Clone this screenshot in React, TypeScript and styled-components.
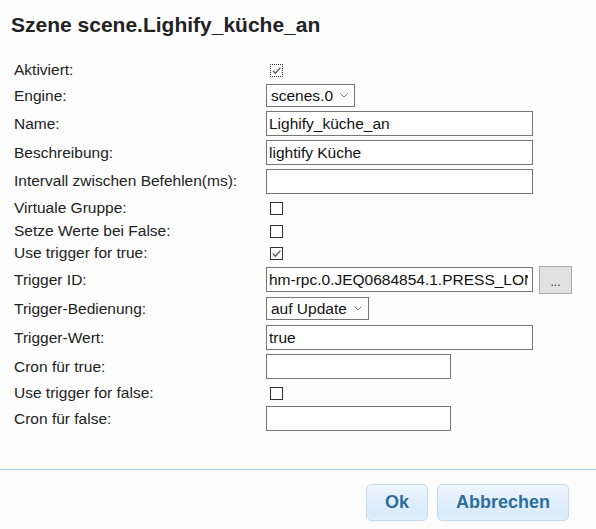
import React from 'react';
import styled, { createGlobalStyle } from 'styled-components';

const GlobalStyle = createGlobalStyle`
  body {
    margin: 0;
    background: #fdfdfd;
    font-family: 'Liberation Sans', Arial, sans-serif;
    color: #222;
  }
`;

const Dialog = styled.div`
  width: 596px;
  height: 529px;
  display: flex;
  flex-direction: column;
`;

const Title = styled.h1`
  margin: 0;
  height: 58px;
  box-sizing: border-box;
  padding: 13px 0 0 11px;
  font-size: 21px;
  font-weight: bold;
  line-height: normal;
  color: #222;
`;

const Form = styled.div`
  display: flex;
  flex-direction: column;
  padding-left: 14px;
`;

const Row = styled.div<{ $h: number }>`
  display: grid;
  grid-template-columns: 252px 1fr;
  align-items: center;
  height: ${(p) => p.$h}px;
`;

const Label = styled.label`
  font-size: 15.5px;
  color: #222;
  white-space: nowrap;
`;

const Cell = styled.div`
  display: flex;
  align-items: center;
`;

const Box = styled.span<{ $focus?: boolean }>`
  display: inline-flex;
  align-items: center;
  justify-content: center;
  width: 13px;
  height: 13px;
  box-sizing: border-box;
  margin-left: 4px;
  border: 1px ${(p) => (p.$focus ? 'dotted' : 'solid')} #333;
  background: #fff;
`;

const TextInput = styled.input<{ $w: number }>`
  width: ${(p) => p.$w}px;
  height: 25px;
  box-sizing: border-box;
  border: 1px solid #767676;
  padding: 0 4px 0 2px;
  margin: 0;
  font-family: 'Liberation Sans', Arial, sans-serif;
  font-size: 15.5px;
  color: #111;
  background: #fff;
  outline: none;
`;

const Select = styled.div<{ $w: number }>`
  display: flex;
  align-items: center;
  justify-content: space-between;
  width: ${(p) => p.$w}px;
  height: 23px;
  box-sizing: border-box;
  border: 1px solid #767676;
  padding: 0 6px 0 4px;
  font-size: 15.5px;
  color: #111;
  background: #fff;
`;

const PickButton = styled.button`
  width: 33px;
  height: 28px;
  margin-left: 6px;
  box-sizing: border-box;
  border: 1px solid #adadad;
  background: #e1e1e1;
  color: #333;
  font-family: 'Liberation Sans', Arial, sans-serif;
  font-size: 12px;
  padding: 4px 0 0;
`;

const Footer = styled.div`
  margin-top: auto;
  height: 60px;
  box-sizing: border-box;
  border-top: 1px solid #aac8db;
  display: flex;
  justify-content: flex-end;
  align-items: flex-start;
  gap: 9px;
  padding: 14px 27px 0 0;
`;

const DialogButton = styled.button`
  height: 37px;
  box-sizing: border-box;
  padding: 0 18px;
  border: 1px solid #c5dbec;
  border-radius: 5px;
  background: linear-gradient(#eef6fd, #dfeefb 55%, #d9eaf9 85%, #e2effb);
  color: #2e6e9e;
  font-family: 'Liberation Sans', Arial, sans-serif;
  font-size: 18px;
  font-weight: bold;
`;

const Check = ({ checked, focus }: { checked?: boolean; focus?: boolean }) => (
  <Box $focus={focus}>
    {checked && (
      <svg width="11" height="11" viewBox="0 0 11 11">
        <polyline points="1.8,5.6 4.4,8.2 9.4,2.6" fill="none" stroke="#555" strokeWidth="1.3" />
      </svg>
    )}
  </Box>
);

const Chevron = () => (
  <svg width="8" height="5" viewBox="0 0 8 5">
    <polyline points="0.5,0.5 4,4 7.5,0.5" fill="none" stroke="#777" strokeWidth="1" />
  </svg>
);

type Field =
  | { label: string; h: number; kind: 'check'; checked?: boolean; focus?: boolean }
  | { label: string; h: number; kind: 'select'; value: string; w: number }
  | { label: string; h: number; kind: 'text'; value: string; w: number; pick?: boolean };

const fields: Field[] = [
  { label: 'Aktiviert:', h: 24, kind: 'check', checked: true, focus: true },
  { label: 'Engine:', h: 27, kind: 'select', value: 'scenes.0', w: 89 },
  { label: 'Name:', h: 29, kind: 'text', value: 'Lighify_küche_an', w: 267 },
  { label: 'Beschreibung:', h: 29, kind: 'text', value: 'lightify Küche', w: 267 },
  { label: 'Intervall zwischen Befehlen(ms):', h: 28, kind: 'text', value: '', w: 267 },
  { label: 'Virtuale Gruppe:', h: 26, kind: 'check' },
  { label: 'Setze Werte bei False:', h: 20, kind: 'check' },
  { label: 'Use trigger for true:', h: 24, kind: 'check', checked: true },
  { label: 'Trigger ID:', h: 29, kind: 'text', value: 'hm-rpc.0.JEQ0684854.1.PRESS_LONG', w: 267, pick: true },
  { label: 'Trigger-Bedienung:', h: 29, kind: 'select', value: 'auf Update', w: 103 },
  { label: 'Trigger-Wert:', h: 29, kind: 'text', value: 'true', w: 267 },
  { label: 'Cron für true:', h: 29, kind: 'text', value: '', w: 185 },
  { label: 'Use trigger for false:', h: 24, kind: 'check' },
  { label: 'Cron für false:', h: 27, kind: 'text', value: '', w: 185 },
];

const renderControl = (f: Field) => {
  if (f.kind === 'check') return <Check checked={f.checked} focus={f.focus} />;
  if (f.kind === 'select')
    return (
      <Select $w={f.w}>
        <span>{f.value}</span>
        <Chevron />
      </Select>
    );
  return (
    <>
      <TextInput $w={f.w} defaultValue={f.value} readOnly />
      {f.pick && <PickButton>...</PickButton>}
    </>
  );
};

export default function App() {
  return (
    <Dialog>
      <GlobalStyle />
      <Title>Szene scene.Lighify_küche_an</Title>
      <Form>
        {fields.map((f) => (
          <Row key={f.label} $h={f.h}>
            <Label>{f.label}</Label>
            <Cell>{renderControl(f)}</Cell>
          </Row>
        ))}
      </Form>
      <Footer>
        <DialogButton>Ok</DialogButton>
        <DialogButton>Abbrechen</DialogButton>
      </Footer>
    </Dialog>
  );
}
